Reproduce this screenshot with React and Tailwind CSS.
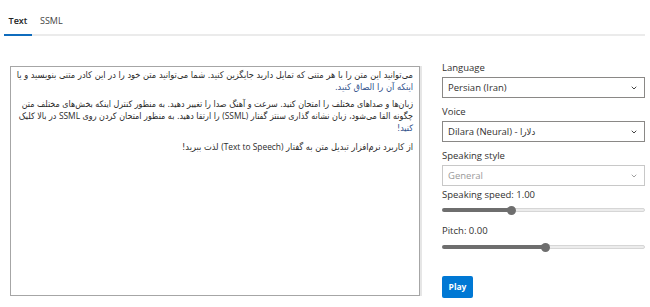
import React from "react";
import { ChevronDown } from "lucide-react";

const latin = { fontFamily: '"Open Sans", "DejaVu Sans", sans-serif' };
const persian = { fontFamily: '"DejaVu Sans Condensed", "DejaVu Sans", sans-serif' };

function Select({ children, disabled }) {
  return (
    <div
      className={`flex items-center justify-between h-[21px] border pl-[5px] pr-[6px] ${
        disabled ? "border-[#c8c8c8] text-[#9a9a9a]" : "border-[#8a8886] text-[#323130]"
      }`}
    >
      <span className="text-[9.5px] leading-none">{children}</span>
      <ChevronDown size={8} strokeWidth={3} className={disabled ? "text-[#a0a0a0]" : "text-[#444]"} />
    </div>
  );
}

function Slider({ pct }) {
  return (
    <div className="flex items-center h-[10px]">
      <div className="h-[4px] rounded-l-full bg-[#6e6e6e]" style={{ width: `${pct}%` }} />
      <div className="w-[9px] h-[9px] rounded-full bg-[#6e6e6e] -mx-[4px] z-10 shrink-0" />
      <div className="flex-1 h-[4px] rounded-r-full bg-[#ececec] border border-[#d6d6d6]" />
    </div>
  );
}

function L({ children }) {
  return (
    <span className="text-[8.4px]" style={latin}>
      {children}
    </span>
  );
}

export default function App() {
  return (
    <div className="w-[650px] h-[307px] bg-white overflow-hidden" style={latin}>
      <div className="flex pl-[4px] pr-[5px] pt-[13px]">
        <div className="w-[28px] text-center pb-[5px] border-b-2 border-[#0f6cbd] text-[9px] font-semibold text-[#242424] leading-[16px]">
          Text
        </div>
        <div className="flex-1 border-b-2 border-[#ebebeb] flex">
          <div className="pl-[8px] text-[9px] text-[#444] leading-[16px]">SSML</div>
        </div>
      </div>

      <div className="flex pl-[10px] mt-[30px]">
        <div
          dir="rtl"
          className="w-[410px] h-[230px] border border-[#a6a6a6] shadow-[2px_0_0_#e6e6e6] pt-[2px] pr-[6px] pl-[3px] text-[9.2px] leading-[11.6px] text-[#2b2b2b] overflow-hidden"
          style={persian}
        >
          <p className="mb-[6.5px]">
            <span className="block whitespace-nowrap">می‌توانید این متن را با هر متنی که تمایل دارید جایگزین کنید. شما می‌توانید متن خود را در این کادر متنی بنویسید و یا</span>
            <span className="block whitespace-nowrap text-[#2f4f8a]">اینکه آن را الصاق کنید.</span>
          </p>
          <p className="mb-[6.5px] text-[8.9px]">
            <span className="block whitespace-nowrap">زبان‌ها و صداهای مختلف را امتحان کنید. سرعت و آهنگ صدا را تغییر دهید. به منظور کنترل اینکه بخش‌های مختلف متن</span>
            <span className="block whitespace-nowrap">
              چگونه القا می‌شود، زبان نشانه گذاری سنتز گفتار <L>(SSML)</L> را ارتقا دهید. به منظور امتحان کردن روی <L>SSML</L> در بالا کلیک
            </span>
            <span className="block whitespace-nowrap text-[#2f4f8a]">کنید!</span>
          </p>
          <p>
            <span className="block whitespace-nowrap">
              از کاربرد نرم‌افزار تبدیل متن به گفتار <L>(Text to Speech)</L> لذت ببرید!
            </span>
          </p>
        </div>

        <div className="ml-[22px] w-[203px] flex flex-col -mt-[4px]">
          <div className="text-[9.5px] leading-[12px] text-[#323130] mb-[3px]">Language</div>
          <Select>Persian (Iran)</Select>
          <div className="text-[9.5px] leading-[12px] text-[#323130] mt-[8px] mb-[3px]">Voice</div>
          <Select>
            Dilara (Neural) - <span style={persian}>دلارا</span>
          </Select>
          <div className="text-[9.5px] leading-[12px] text-[#323130] mt-[8px] mb-[3px]">Speaking style</div>
          <Select disabled>General</Select>
          <div className="text-[9.5px] leading-[12px] text-[#323130] mt-[3px]">Speaking speed: 1.00</div>
          <div className="mt-[4px]">
            <Slider pct={34} />
          </div>
          <div className="text-[9.5px] leading-[12px] text-[#323130] mt-[10px]">Pitch: 0.00</div>
          <div className="mt-[5px]">
            <Slider pct={50.5} />
          </div>
          <div className="mt-[20px]">
            <button className="w-[31px] h-[22px] bg-[#0078d4] rounded-[2px] text-white text-[8.5px] font-bold">
              Play
            </button>
          </div>
        </div>
      </div>
    </div>
  );
}
